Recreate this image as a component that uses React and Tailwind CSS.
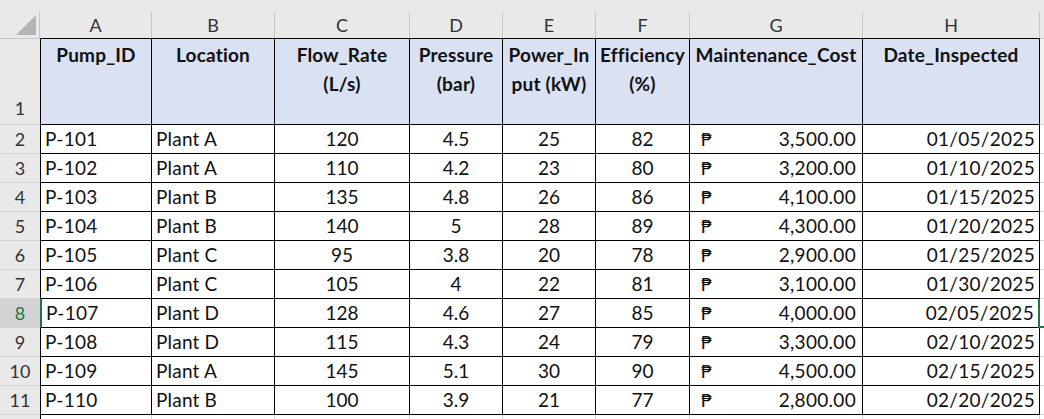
const columns = ["A", "B", "C", "D", "E", "F", "G", "H"];

const rows = [
  ["P-101", "Plant A", "120", "4.5", "25", "82", "3,500.00", "01/05/2025"],
  ["P-102", "Plant A", "110", "4.2", "23", "80", "3,200.00", "01/10/2025"],
  ["P-103", "Plant B", "135", "4.8", "26", "86", "4,100.00", "01/15/2025"],
  ["P-104", "Plant B", "140", "5", "28", "89", "4,300.00", "01/20/2025"],
  ["P-105", "Plant C", "95", "3.8", "20", "78", "2,900.00", "01/25/2025"],
  ["P-106", "Plant C", "105", "4", "22", "81", "3,100.00", "01/30/2025"],
  ["P-107", "Plant D", "128", "4.6", "27", "85", "4,000.00", "02/05/2025"],
  ["P-108", "Plant D", "115", "4.3", "24", "79", "3,300.00", "02/10/2025"],
  ["P-109", "Plant A", "145", "5.1", "30", "90", "4,500.00", "02/15/2025"],
  ["P-110", "Plant B", "100", "3.9", "21", "77", "2,800.00", "02/20/2025"],
];

const headers = [
  ["Pump_ID"],
  ["Location"],
  ["Flow_Rate", "(L/s)"],
  ["Pressure", "(bar)"],
  ["Power_In", "put (kW)"],
  ["Efficiency", "(%)"],
  ["Maintenance_Cost"],
  ["Date_Inspected"],
];

const SELECTED = 8;

export default function App() {
  return (
    <div className="w-[1044px] h-[419px] overflow-hidden bg-white text-[19px] text-[#111] font-['Lato','DejaVu_Sans',sans-serif]">
      <div className="grid grid-cols-[40px_112px_123px_135px_93px_93px_94px_173px_177px_1fr]">
        {/* column letters */}
        <div className="h-[38px] bg-[#e9e9e9] pt-3">
          <div className="h-full border-r border-[#c6c6c6] flex items-end justify-end pr-[3px] pb-[3px]">
            <svg width="20" height="20" viewBox="0 0 20 20">
              <polygon points="20,0 20,20 0,20" fill="#b5b5b5" />
            </svg>
          </div>
        </div>
        {columns.map((c) => (
          <div key={c} className="h-[38px] bg-[#e9e9e9] pt-3">
            <div className="h-full border-r border-[#c6c6c6] flex items-center justify-center text-[#333] text-[18px]">
              {c}
            </div>
          </div>
        ))}
        <div className="h-[38px] bg-[#e9e9e9] pt-3">
          <div className="h-full" />
        </div>

        {/* header row */}
        <div className="h-[87px] bg-[#e9e9e9] border-t border-[#c6c6c6] border-b border-b-[#d4d4d4] flex items-end justify-center pb-[2px] text-[#333] text-[18px]">
          1
        </div>
        {headers.map((h, i) => (
          <div
            key={i}
            className={`h-[87px] bg-[#d9e1f2] border-t border-b border-r border-black pt-[1px] flex flex-col items-center font-bold leading-[29px] tracking-[0.2px] ${i === 0 ? "border-l" : ""}`}
          >
            {h.map((line) => (
              <span key={line} className="whitespace-nowrap">
                {line}
              </span>
            ))}
          </div>
        ))}
        <div className="h-[87px] bg-[#f2f2f2] border-t border-[#c6c6c6] border-b border-b-[#d4d4d4]" />

        {/* data rows */}
        {rows.map((r, idx) => {
          const n = idx + 2;
          const sel = n === SELECTED;
          return [
            <div
              key={`h${n}`}
              className={`h-[29px] border-b border-[#d4d4d4] flex items-center justify-center text-[18px] ${sel ? "bg-[#d3d3d3] text-[#217346]" : "bg-[#e9e9e9] text-[#333]"}`}
            >
              {n}
            </div>,
            <div
              key={`a${n}`}
              className={`h-[29px] border-b border-r border-black flex items-center pl-[4px] tracking-[0.3px] ${sel ? "border-l-2 border-l-[#217346]" : "border-l"}`}
            >
              {r[0]}
            </div>,
            <div key={`b${n}`} className="h-[29px] border-b border-r border-black flex items-center pl-[4px] tracking-[0.2px]">
              {r[1]}
            </div>,
            <div key={`c${n}`} className="h-[29px] border-b border-r border-black flex items-center justify-center">
              {r[2]}
            </div>,
            <div key={`d${n}`} className="h-[29px] border-b border-r border-black flex items-center justify-center">
              {r[3]}
            </div>,
            <div key={`e${n}`} className="h-[29px] border-b border-r border-black flex items-center justify-center">
              {r[4]}
            </div>,
            <div key={`f${n}`} className="h-[29px] border-b border-r border-black flex items-center justify-center">
              {r[5]}
            </div>,
            <div key={`g${n}`} className="h-[29px] border-b border-r border-black flex items-center justify-between pl-[11px] pr-[6px]">
              <span className="text-[18px] font-['DejaVu_Sans',sans-serif]">₱</span>
              <span className="tracking-[0.3px]">{r[6]}</span>
            </div>,
            <div
              key={`hh${n}`}
              className={`relative h-[29px] border-b border-black flex items-center justify-end pr-[4px] tracking-[0.3px] ${sel ? "border-r-2 border-r-[#217346]" : "border-r"}`}
            >
              {r[7]}
              {sel && <span className="absolute right-[-6px] bottom-[-1px] w-[6px] h-[2px] bg-[#217346]" />}
            </div>,
            <div key={`i${n}`} className="h-[29px] border-b border-[#d4d4d4]" />,
          ];
        })}

        {/* partial next row */}
        <div className="h-[4px] bg-[#e9e9e9]" />
        {columns.map((c) => (
          <div key={`z${c}`} className={`h-[4px] border-r border-[#d4d4d4] ${c === "A" ? "border-l border-l-black" : ""}`} />
        ))}
        <div className="h-[4px]" />
      </div>
    </div>
  );
}
